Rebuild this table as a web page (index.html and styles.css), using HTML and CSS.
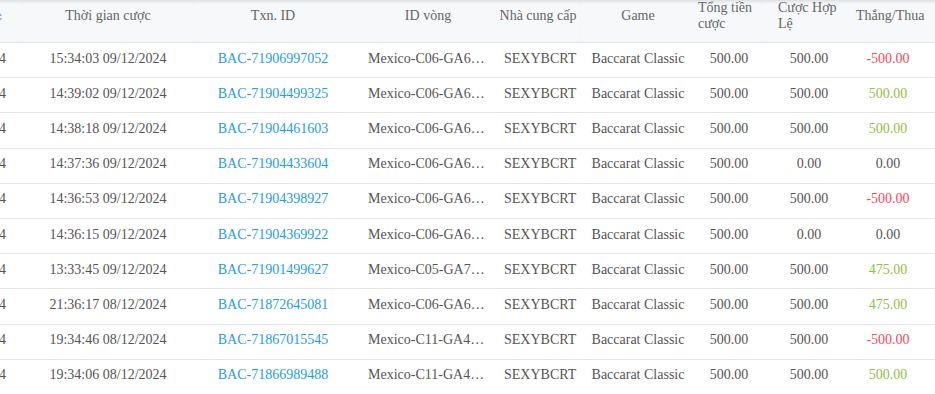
FILE: index.html
```html
<!DOCTYPE html>
<html lang="vi">
<head>
<meta charset="utf-8">
<title>Lịch sử cược</title>
<link rel="stylesheet" href="styles.css">
</head>
<body>
<div class="viewport">
  <table class="bets">
    <colgroup>
      <col class="c0"><col class="c1"><col class="c2"><col class="c3"><col class="c4">
      <col class="c5"><col class="c6"><col class="c7"><col class="c8"><col class="c9">
    </colgroup>
    <thead>
      <tr>
        <th class="h0"><svg class="sort" width="4" height="10" viewBox="0 0 4 10"><path d="M0 4 L2 1 L4 4Z M0 6 L2 9 L4 6Z" fill="#7fb2e0"/></svg></th>
        <th>Thời gian cược</th>
        <th>Txn. ID</th>
        <th class="h3">ID vòng</th>
        <th class="tight">Nhà cung cấp</th>
        <th>Game</th>
        <th class="wrap h6">Tổng tiền cược</th>
        <th class="wrap h7">Cược Hợp Lệ</th>
        <th class="tight">Thắng/Thua</th>
        <th></th>
      </tr>
    </thead>
    <tbody>
      <tr><td class="first">15:34:03 09/12/2024</td><td>15:34:03 09/12/2024</td><td><a class="txn">BAC-71906997052</a></td><td class="round">Mexico-C06-GA612-0078</td><td>SEXYBCRT</td><td>Baccarat Classic</td><td>500.00</td><td>500.00</td><td class="loss">-500.00</td><td></td></tr>
      <tr><td class="first">14:39:02 09/12/2024</td><td>14:39:02 09/12/2024</td><td><a class="txn">BAC-71904499325</a></td><td class="round">Mexico-C06-GA612-0066</td><td>SEXYBCRT</td><td>Baccarat Classic</td><td>500.00</td><td>500.00</td><td class="win">500.00</td><td></td></tr>
      <tr><td class="first">14:38:18 09/12/2024</td><td>14:38:18 09/12/2024</td><td><a class="txn">BAC-71904461603</a></td><td class="round">Mexico-C06-GA612-0065</td><td>SEXYBCRT</td><td>Baccarat Classic</td><td>500.00</td><td>500.00</td><td class="win">500.00</td><td></td></tr>
      <tr><td class="first">14:37:36 09/12/2024</td><td>14:37:36 09/12/2024</td><td><a class="txn">BAC-71904433604</a></td><td class="round">Mexico-C06-GA612-0064</td><td>SEXYBCRT</td><td>Baccarat Classic</td><td>500.00</td><td>0.00</td><td>0.00</td><td></td></tr>
      <tr><td class="first">14:36:53 09/12/2024</td><td>14:36:53 09/12/2024</td><td><a class="txn">BAC-71904398927</a></td><td class="round">Mexico-C06-GA612-0063</td><td>SEXYBCRT</td><td>Baccarat Classic</td><td>500.00</td><td>500.00</td><td class="loss">-500.00</td><td></td></tr>
      <tr><td class="first">14:36:15 09/12/2024</td><td>14:36:15 09/12/2024</td><td><a class="txn">BAC-71904369922</a></td><td class="round">Mexico-C06-GA612-0062</td><td>SEXYBCRT</td><td>Baccarat Classic</td><td>500.00</td><td>0.00</td><td>0.00</td><td></td></tr>
      <tr><td class="first">13:33:45 09/12/2024</td><td>13:33:45 09/12/2024</td><td><a class="txn">BAC-71901499627</a></td><td class="round">Mexico-C05-GA713-0041</td><td>SEXYBCRT</td><td>Baccarat Classic</td><td>500.00</td><td>500.00</td><td class="win">475.00</td><td></td></tr>
      <tr><td class="first">21:36:17 08/12/2024</td><td>21:36:17 08/12/2024</td><td><a class="txn">BAC-71872645081</a></td><td class="round">Mexico-C06-GA611-0087</td><td>SEXYBCRT</td><td>Baccarat Classic</td><td>500.00</td><td>500.00</td><td class="win">475.00</td><td></td></tr>
      <tr><td class="first">19:34:46 08/12/2024</td><td>19:34:46 08/12/2024</td><td><a class="txn">BAC-71867015545</a></td><td class="round">Mexico-C11-GA411-0052</td><td>SEXYBCRT</td><td>Baccarat Classic</td><td>500.00</td><td>500.00</td><td class="loss">-500.00</td><td></td></tr>
      <tr><td class="first">19:34:06 08/12/2024</td><td>19:34:06 08/12/2024</td><td><a class="txn">BAC-71866989488</a></td><td class="round">Mexico-C11-GA411-0051</td><td>SEXYBCRT</td><td>Baccarat Classic</td><td>500.00</td><td>500.00</td><td class="win">500.00</td><td></td></tr>
    </tbody>
  </table>
</div>
</body>
</html>
```

FILE: styles.css
```css
html, body {
  margin: 0;
  padding: 0;
  background: #ffffff;
}

.viewport {
  width: 935px;
  height: 394px;
  overflow: hidden;
}

.bets {
  margin-left: -120px;
  width: 1080px;
  table-layout: fixed;
  border-collapse: separate;
  border-spacing: 0;
  font-family: "Liberation Serif", "Times New Roman", serif;
  font-size: 14px;
  color: #555555;
}

.c0 { width: 142px; }
.c1 { width: 172px; }
.c2 { width: 158px; }
.c3 { width: 144px; }
.c4 { width: 84px; }
.c5 { width: 116px; }
.c6 { width: 66px; }
.c7 { width: 94px; }
.c8 { width: 64px; }
.c9 { width: 40px; }

.bets th {
  box-sizing: border-box;
  height: 42px;
  padding: 0 8px 10px;
  background: #f7f8fa;
  border-bottom: 1px solid #e6e6e6;
  box-shadow: inset 0 4px 4px -3px rgba(0, 0, 0, 0.14);
  font-weight: normal;
  color: #666666;
  line-height: 16px;
  text-align: center;
  vertical-align: middle;
  white-space: nowrap;
}

.bets th.h0 {
  text-align: right;
  padding-right: 20px;
}

.sort {
  display: inline-block;
  vertical-align: middle;
}

.bets th.h3 {
  padding-left: 16px;
  padding-right: 8px;
}

.bets th.tight {
  padding-left: 0;
  padding-right: 0;
}

.bets th.wrap {
  white-space: normal;
  text-align: left;
}

.bets th.h6 {
  padding-left: 2px;
  padding-right: 6px;
}

.bets th.h7 {
  padding-left: 16px;
  padding-right: 16px;
}

.bets td {
  box-sizing: border-box;
  height: 35.2px;
  padding: 0 8px 3px;
  border-bottom: 1px solid #e6e6e6;
  text-align: center;
  vertical-align: middle;
  white-space: nowrap;
  line-height: 20px;
}

.bets td.first {
  text-align: right;
  padding-right: 16px;
}

.bets td.round {
  padding-left: 16px;
  padding-right: 8px;
  overflow: hidden;
  text-overflow: ellipsis;
  text-align: left;
}

.txn {
  color: #1c9ee8;
  text-decoration: none;
  cursor: pointer;
}

.bets td.win {
  color: #93c041;
}

.bets td.loss {
  color: #f5475e;
}
```
